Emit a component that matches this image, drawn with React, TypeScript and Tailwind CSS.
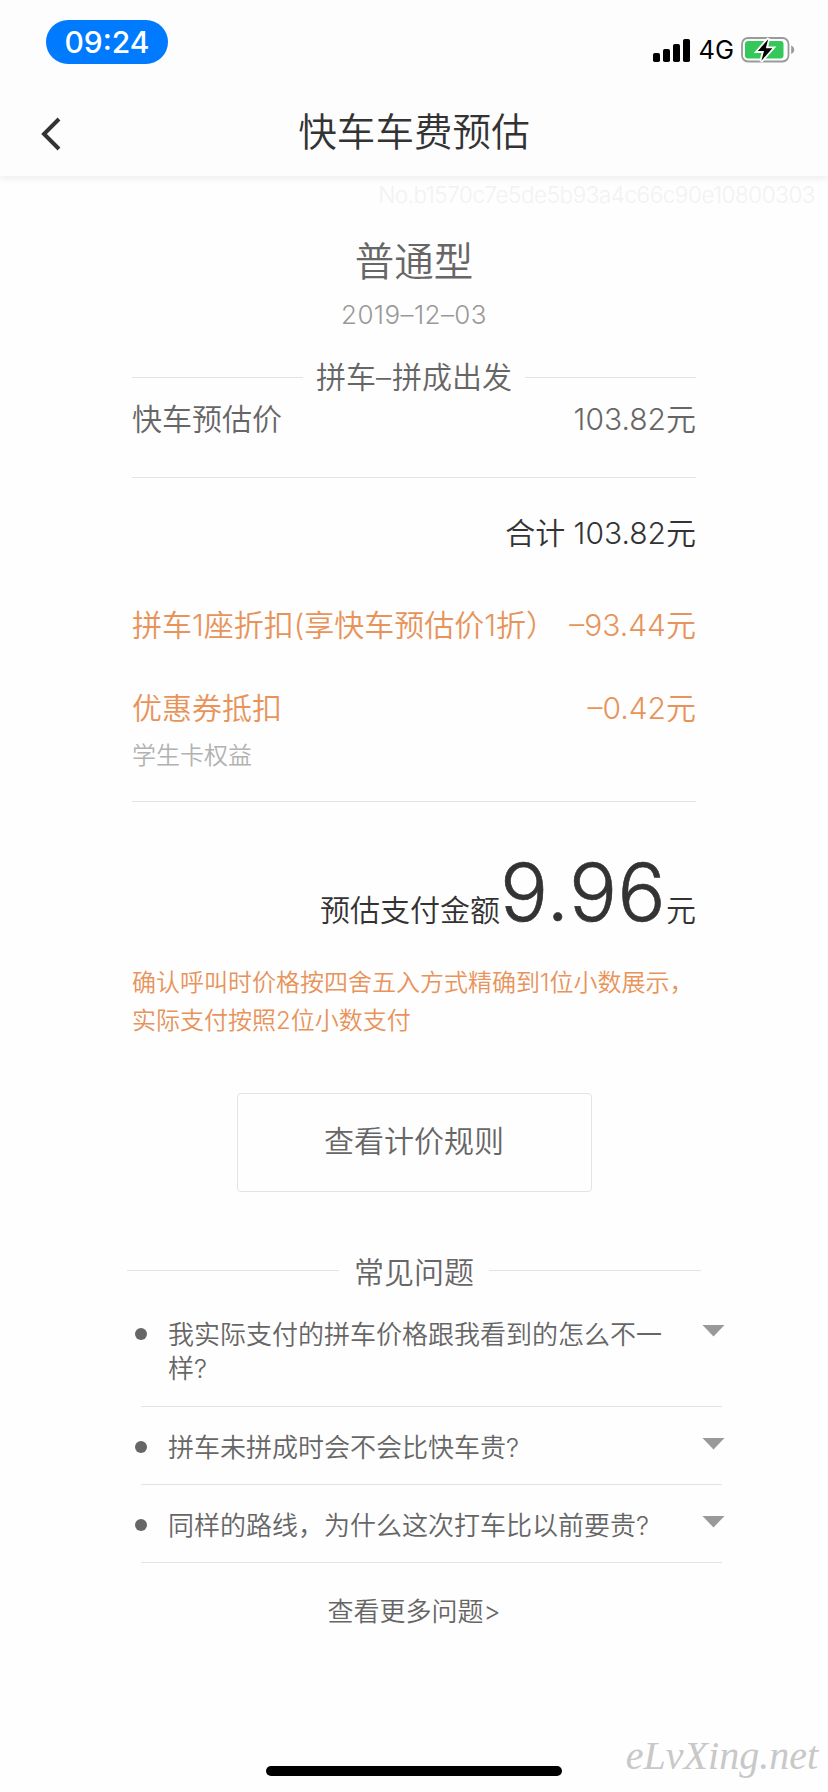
import React from 'react';
import { clsx } from 'clsx';

interface FareRow {
  label: string;
  amount: string;
  className: string;
}

const discounts: FareRow[] = [
  { label: '拼车1座折扣(享快车预估价1折）', amount: '–93.44元', className: 'mt-14' },
  { label: '优惠券抵扣', amount: '–0.42元', className: 'mt-[47px]' },
];

const questions = [
  { text: '我实际支付的拼车价格跟我看到的怎么不一样?', className: 'pb-5' },
  { text: '拼车未拼成时会不会比快车贵?', className: 'pt-[23px] pb-[19px]' },
  { text: '同样的路线，为什么这次打车比以前要贵?', className: 'pt-[23px] pb-[19px]' },
];

const BatteryIcon: React.FC = () => (
  <svg width="54" height="26" viewBox="0 0 54 26" fill="none">
    <rect x="1" y="1" width="46.5" height="23.5" rx="6" stroke="#9a9a9a" strokeWidth="1.8" />
    <rect x="4" y="4" width="38.5" height="17.5" rx="3.2" fill="#34c759" />
    <path d="M50.2 8.6c2 .8 3 2.300 3 4.200s-1 3.400-3 4.200z" fill="#9a9a9a" />
    <path d="M27.500 1.500 16.300 14.300h6.200L20 24.500l11.800-13.400h-6.400z" fill="#000" stroke="#fff" strokeWidth="3.200" />
    <path d="M27.200 2.300 16.800 14.100h6.200L20.400 23.700l11-12.400h-6.600z" fill="#000" />
  </svg>
);

const StatusBar: React.FC = () => (
  <div className="flex h-[88px] items-start justify-between pl-[46px] pr-[33px] pt-5">
    <div className="flex h-11 w-[122px] items-center justify-center rounded-full bg-[#007aff] text-[30px] font-medium leading-none text-white">
      09:24
    </div>
    <div className="flex items-center pt-[17px]">
      <svg width="38" height="23" viewBox="0 0 38 23" fill="#000">
        <rect x="0" y="14" width="7" height="9" rx="1.800" />
        <rect x="10" y="10" width="7" height="13" rx="1.800" />
        <rect x="20" y="5" width="7" height="18" rx="1.800" />
        <rect x="30" y="0" width="7" height="23" rx="1.800" />
      </svg>
      <span className="ml-2 mr-[7px] text-[25.500px] leading-[26px] font-normal">4G</span>
      <BatteryIcon />
    </div>
  </div>
);

const SectionTitle: React.FC<{ children: React.ReactNode; className?: string; gap: string; line?: string }> = ({
  children,
  className,
  gap,
  line,
}) => (
  <div className={clsx('flex h-9 items-center text-[30px] leading-9 text-[#666]', className)}>
    <div className={clsx('h-px flex-1 bg-[#e3e3e3]', line)} />
    <span className={gap}>{children}</span>
    <div className={clsx('h-px flex-1 bg-[#e3e3e3]', line)} />
  </div>
);

export default function App() {
  return (
    <div className="relative h-[1792px] w-[828px] overflow-hidden bg-[#fefefe] font-['Inter','Noto_Sans_CJK_SC',sans-serif] font-[350]">
      <header className="h-[176px] bg-[#fdfdfd] shadow-[0_2px_8px_rgba(0,0,0,0.08)]">
        <StatusBar />
        <div className="flex h-[88px] items-center justify-between pl-[40px] pr-[40px]">
          <svg width="22" height="34" viewBox="0 0 22 34" fill="none" stroke="#333" strokeWidth="4" className="mt-[4px]">
            <path d="M19 2 4 17l15 15" />
          </svg>
          <h1 className="text-[38.600px] leading-[48px] text-[#333]">快车车费预估</h1>
          <span className="w-[22px]" />
        </div>
      </header>

      <p className="h-[38px] pr-[13px] text-right text-[22.500px] font-light leading-[38px] tracking-[-0.46px] text-[#f2f2f2]">
        No.b1570c7e5de5b93a4c66c90e10800303
      </p>

      <main className="mx-auto w-[564px]">
        <h2 className="mt-[23px] h-[50px] text-center text-[39.500px] leading-[50px] text-[#666]">普通型</h2>
        <p className="mt-3 h-8 text-center text-[26px] font-light leading-8 tracking-[0.4px] text-[#999]">2019–12–03</p>

        <SectionTitle className="mt-[28px]" gap="px-[13px]">
          拼车<span className="tracking-[1px]">–</span>拼成出发
        </SectionTitle>

        <div className="mt-[6px] flex h-9 justify-between text-[30px] leading-9 text-[#666]">
          <span>快车预估价</span>
          <span>103.82元</span>
        </div>
        <div className="mt-10 h-px bg-[#e3e3e3]" />
        <p className="mt-[37px] h-9 text-right text-[30px] leading-9 text-[#333]">合计 103.82元</p>

        {discounts.map((row) => (
          <div
            key={row.label}
            className={clsx('flex h-9 justify-between whitespace-nowrap text-[30px] leading-9 text-[#e8935a]', row.className)}
          >
            <span>{row.label}</span>
            <span>{row.amount}</span>
          </div>
        ))}
        <p className="mt-[14px] h-8 text-[24px] leading-8 text-[#b2b2b2]">学生卡权益</p>
        <div className="mt-[29px] h-px bg-[#e3e3e3]" />

        <div className="mt-[50px] flex h-20 items-baseline justify-end text-[30px] leading-[80px] text-[#333]">
          <span>预估支付金额</span>
          <span className="text-[80px] font-light tracking-[0.4px] [-webkit-text-stroke:0.6px_#333]">9.96</span>
          <span>元</span>
        </div>

        <p className="mt-8 text-[24px] leading-[38px] text-[#e8935a]">
          确认呼叫时价格按四舍五入方式精确到1位小数展示，
          <br />
          实际支付按照2位小数支付
        </p>

        <button className="mx-auto mt-[53px] flex h-[99px] w-[355px] items-center justify-center rounded-[4px] border border-[#e3e3e3] pb-[2px] text-[30px] font-[350] text-[#666]">
          查看计价规则
        </button>
      </main>

      <section className="mx-auto w-[574px]">
        <SectionTitle className="mt-[62px]" gap="px-[15px]" line="-mt-1">常见问题</SectionTitle>
      </section>

      <ul className="ml-[141px] mt-[27px] w-[581px]">
        {questions.map((q) => (
          <li key={q.text} className={clsx('flex items-start border-b border-[#e3e3e3]', q.className)}>
            <span className="-ml-[6px] mt-[11px] h-3 w-3 shrink-0 rounded-full bg-[#666]" />
            <p className="ml-[21px] w-[500px] pt-px text-[26px] leading-[34px] text-[#666]">{q.text}</p>
            <svg width="24" height="12" viewBox="0 0 24 12" fill="#999" className="-mr-1 ml-auto mt-[8px] shrink-0">
              <path d="M0.500 0h22L11.500 11.500z" />
            </svg>
          </li>
        ))}
      </ul>

      <p className="mt-[32px] text-center text-[26px] leading-[34px] text-[#666]">查看更多问题&gt;</p>

      <div className="mx-auto mt-[137px] h-[10px] w-[296px] rounded-full bg-black" />
      <span className="absolute bottom-[12px] right-[10px] font-['Liberation_Serif',cursive] text-[40px] font-normal italic leading-[48px] text-[#c8c8c8]">
        eLvXing.net
      </span>
    </div>
  );
}
